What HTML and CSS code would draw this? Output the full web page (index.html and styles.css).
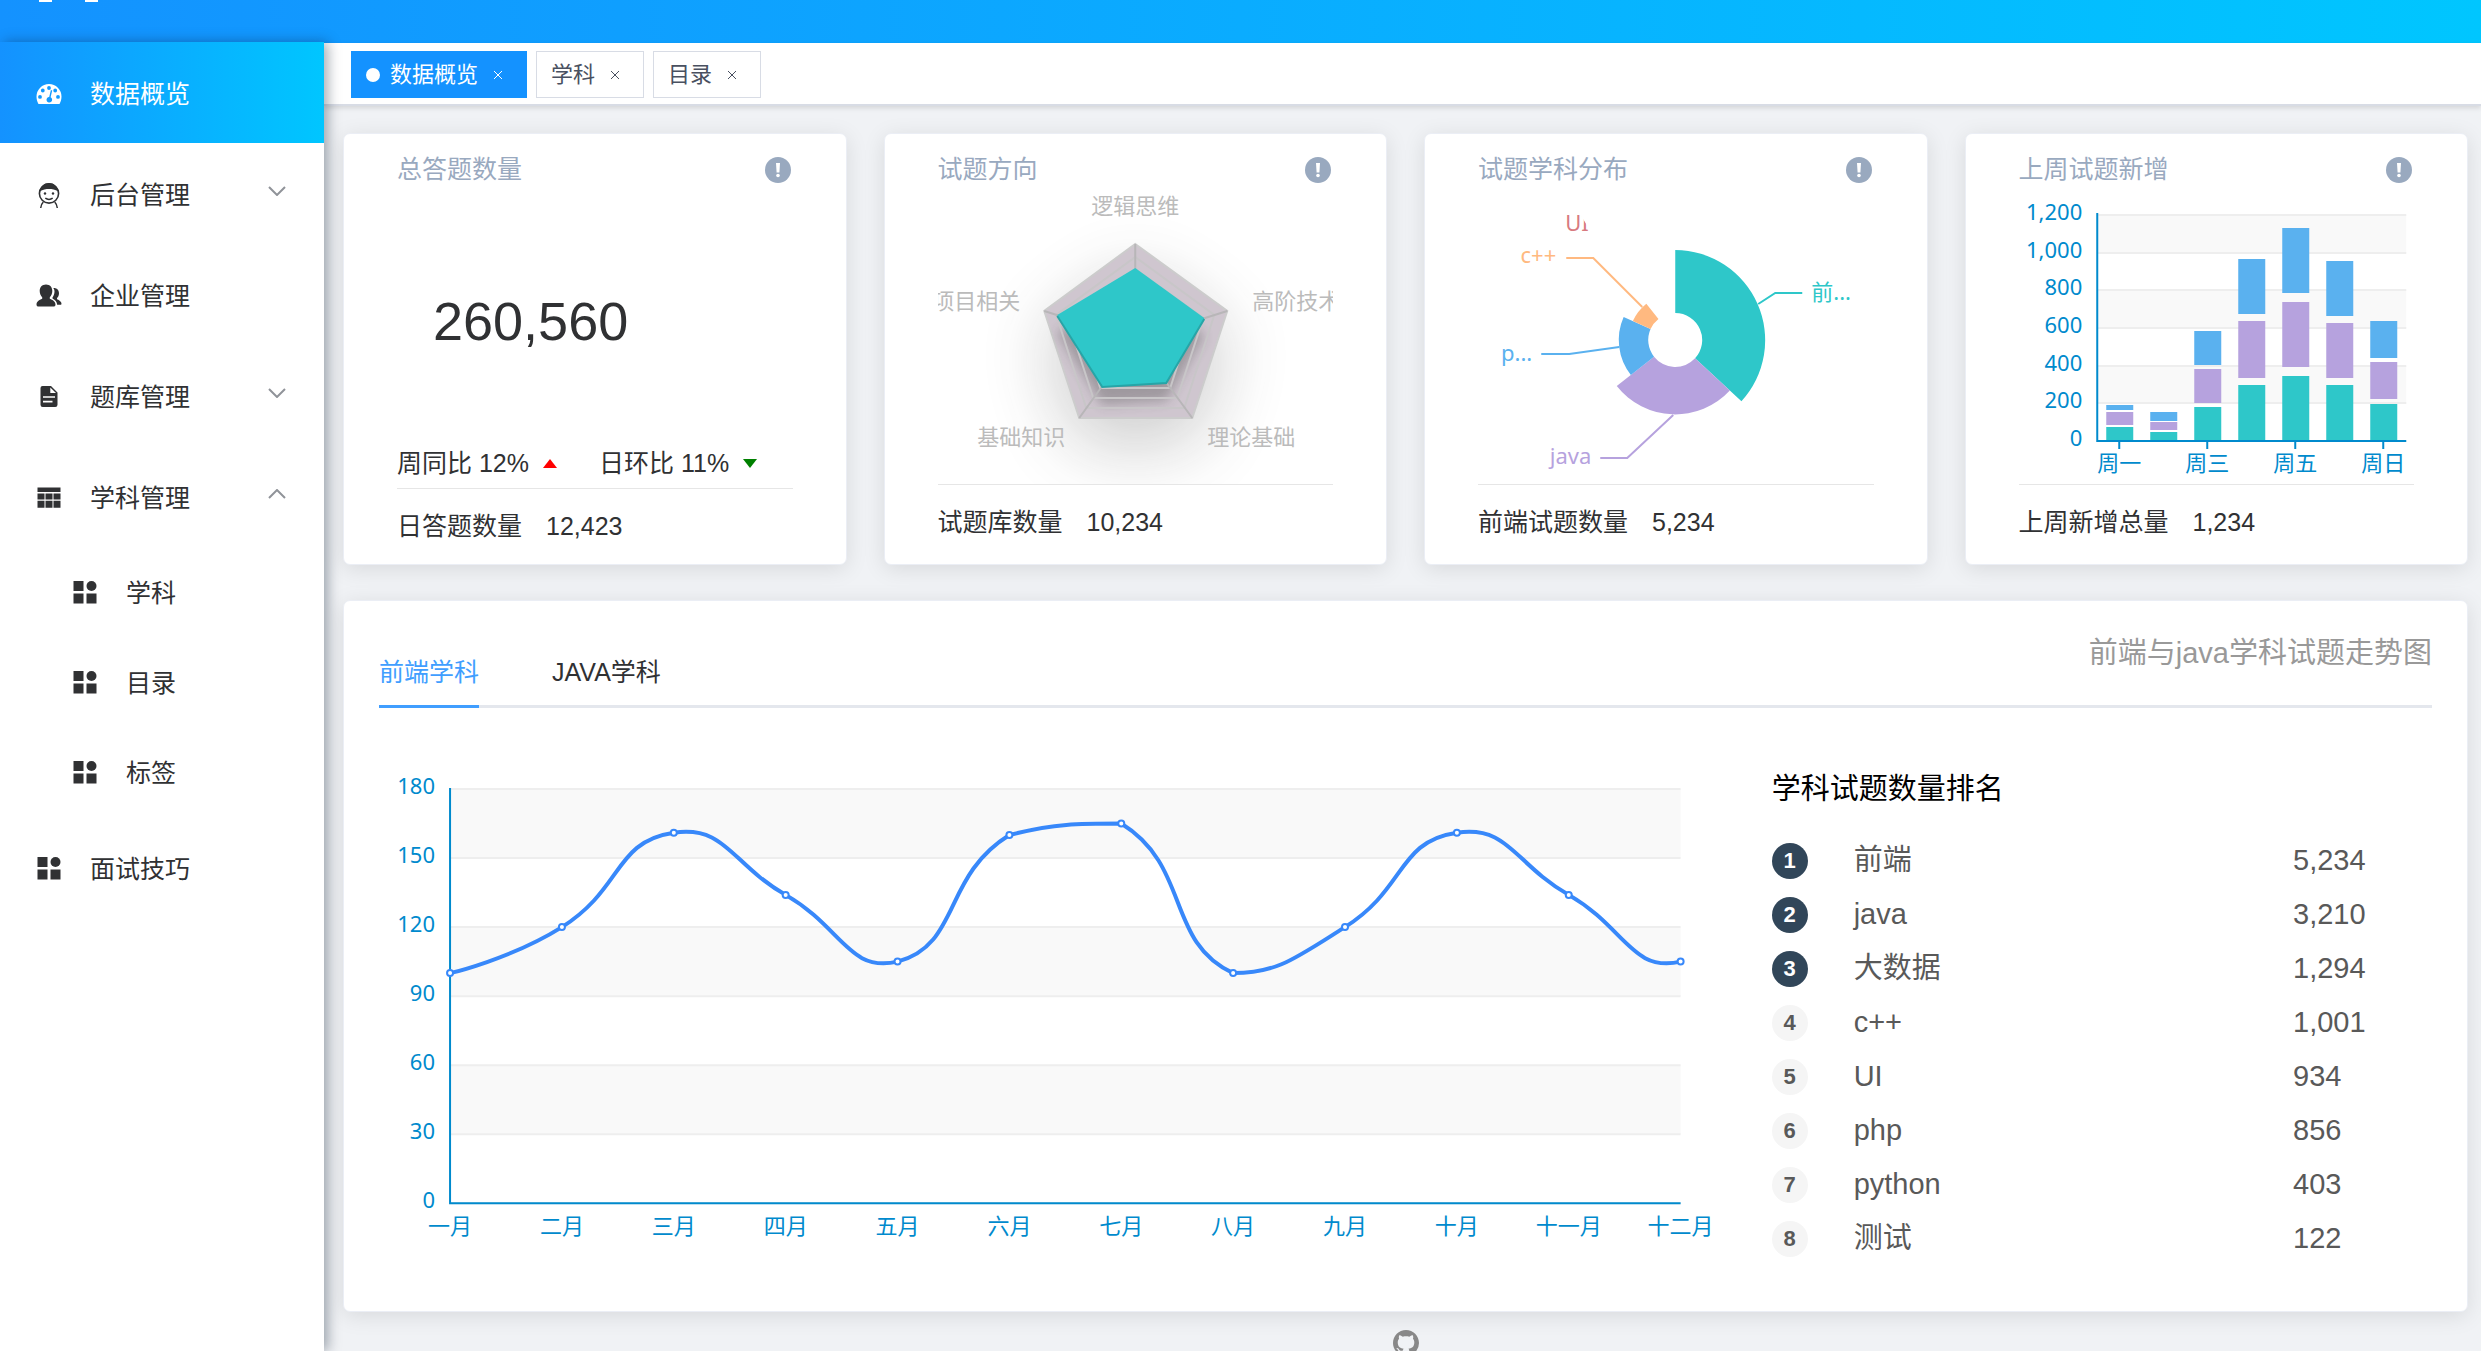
FILE: index.html
```html
<!DOCTYPE html>
<html lang="zh-CN">
<head>
<meta charset="utf-8">
<meta name="viewport" content="width=device-width, initial-scale=1">
<title>数据概览</title>
<link rel="stylesheet" href="styles.css">
</head>
<body>
<svg class="sprite" aria-hidden="true">
  <symbol id="i-dashboard" viewBox="0 0 26 26">
    <path fill-rule="evenodd" d="M13 3A12.500 12.500 0 0 0 .5 15.500c0 2.700.7 5.200 2 7.500h21c1.300-2.300 2-4.800 2-7.500A12.500 12.500 0 0 0 13 3zM4 17.800a1.900 1.900 0 1 1 0-3.800 1.900 1.900 0 0 1 0 3.800zm2.800-6.400a1.900 1.900 0 1 1 0-3.800 1.900 1.900 0 0 1 0 3.800zM13 8.900a1.900 1.900 0 1 1 0-3.800 1.900 1.900 0 0 1 0 3.800zm1.900.1 1.300.4-1.600 6.900a2.800 2.800 0 1 1-1.400-.3zm4.300 2.400a1.900 1.900 0 1 1 0-3.800 1.900 1.900 0 0 1 0 3.800zm2.800 6.400a1.900 1.900 0 1 1 0-3.800 1.900 1.900 0 0 1 0 3.800z"/>
  </symbol>
  <symbol id="i-face" viewBox="0 0 26 26">
    <circle cx="13" cy="11.500" r="9.600" fill="none" stroke="currentColor" stroke-width="1.600"/>
    <path d="M3.500 9.500C4.500 4 8.500 1 13 1s8.500 3 9.500 8.500C19 7.300 16 7 13 7S7 7.300 3.500 9.500z"/>
    <circle cx="9" cy="11.500" r="1.200"/><circle cx="17" cy="11.500" r="1.200"/>
    <path d="M9.300 16.200q3.700 2.600 7.400 0M7.300 20q-2.300 2.300-2.600 6M18.700 20q2.300 2.300 2.600 6" fill="none" stroke="currentColor" stroke-width="1.500"/>
  </symbol>
  <symbol id="i-people" viewBox="0 0 26 26">
    <path d="M10 1.500c4 0 6.300 2.800 6.300 6.500 0 2.500-1 4.800-2.500 6.200v1.600c3 1 5.700 3 5.700 5.700 0 1.500-.8 2-2 2H2.500c-1.200 0-2-.5-2-2 0-2.700 2.700-4.700 5.700-5.700v-1.600C4.700 12.800 3.700 10.500 3.700 8c0-3.700 2.300-6.500 6.300-6.500z"/>
    <path d="M17.300 5c3.600-.2 5.700 2 5.700 5.300 0 2.300-1 3.800-2 4.800v1.200c2.500.9 4.500 2.600 4.500 4.500 0 .8-.4 1-1 1h-3.300c-.3-2.800-2-4.800-4.700-6.200v-1.200c1.400-1.700 2-3.800 2-6.100 0-1.200-.4-2.300-1.200-3.300z"/>
  </symbol>
  <symbol id="i-doc" viewBox="0 0 26 26">
    <path fill-rule="evenodd" d="M6.500 2H15l6.500 6.500v12.300a2.200 2.200 0 0 1-2.200 2.200H6.700a2.200 2.200 0 0 1-2.200-2.200V4a2 2 0 0 1 2-2zm7.800 1.500V9h5.700zM7 12.200v1.600h12v-1.600zm0 4.600v1.600h9.500v-1.600z"/>
  </symbol>
  <symbol id="i-table" viewBox="0 0 26 26">
    <path d="M1.500 2.500h23V7h-23zM1.500 8.500h7v6h-7zM9.500 8.500h7v6h-7zM17.500 8.500h7v6h-7zM1.500 15.800h7v7h-7zM9.500 15.800h7v7h-7zM17.500 15.800h7v7h-7z"/>
  </symbol>
  <symbol id="i-component" viewBox="0 0 26 26">
    <path d="M1.500 1h10v10h-10zM1.500 13.500h10v10h-10zM14.500 13.500h10v10h-10z"/><circle cx="19.500" cy="6" r="5"/>
  </symbol>
  <symbol id="i-down" viewBox="0 0 18 10"><path d="M1 1l8 8 8-8" fill="none" stroke="currentColor" stroke-width="2"/></symbol>
  <symbol id="i-up" viewBox="0 0 18 10"><path d="M1 9l8-8 8 8" fill="none" stroke="currentColor" stroke-width="2"/></symbol>
  <symbol id="i-close" viewBox="0 0 10 10"><path d="M1 1l8 8M9 1L1 9" fill="none" stroke="currentColor"/></symbol>
  <symbol id="i-info" viewBox="0 0 26 26">
    <circle cx="13" cy="13" r="13"/><path d="M11 6h4l-.6 9.500h-2.800z" fill="#fff"/><circle cx="13" cy="18.500" r="1.800" fill="#fff"/>
  </symbol>
</svg>

<div class="app">
  <header class="topbar"><div class="brand" aria-hidden="true"><i></i><i></i></div></header>
  <div class="shell">
    <nav class="sidebar" aria-label="主菜单">
      <a class="item active" href="#"><svg class="ico"><use href="#i-dashboard"/></svg><span>数据概览</span></a>
      <button class="item" type="button" aria-expanded="false"><svg class="ico"><use href="#i-face"/></svg><span>后台管理</span><svg class="arrow"><use href="#i-down"/></svg></button>
      <a class="item" href="#"><svg class="ico"><use href="#i-people"/></svg><span>企业管理</span></a>
      <button class="item" type="button" aria-expanded="false"><svg class="ico"><use href="#i-doc"/></svg><span>题库管理</span><svg class="arrow"><use href="#i-down"/></svg></button>
      <button class="item" type="button" aria-expanded="true"><svg class="ico"><use href="#i-table"/></svg><span>学科管理</span><svg class="arrow"><use href="#i-up"/></svg></button>
      <a class="item sub" href="#"><svg class="ico"><use href="#i-component"/></svg><span>学科</span></a>
      <a class="item sub" href="#"><svg class="ico"><use href="#i-component"/></svg><span>目录</span></a>
      <a class="item sub" href="#"><svg class="ico"><use href="#i-component"/></svg><span>标签</span></a>
      <a class="item" href="#"><svg class="ico"><use href="#i-component"/></svg><span>面试技巧</span></a>
    </nav>

    <div class="content">
      <div class="views">
        <div class="view current"><i class="dot"></i><a href="#">数据概览</a><button type="button" aria-label="关闭数据概览"><svg><use href="#i-close"/></svg></button></div>
        <div class="view"><a href="#">学科</a><button type="button" aria-label="关闭学科"><svg><use href="#i-close"/></svg></button></div>
        <div class="view"><a href="#">目录</a><button type="button" aria-label="关闭目录"><svg><use href="#i-close"/></svg></button></div>
      </div>

      <main class="main">
        <section class="cards">
          <article class="card">
            <div class="card-head"><h2>总答题数量</h2><svg class="info"><use href="#i-info"/></svg></div>
            <div class="summary">
              <p class="total">260,560</p>
              <p class="rates">
                <span class="rate">周同比 12%<svg class="caret up" viewBox="0 0 14 9"><path d="M0 9L7 0l7 9z"/></svg></span>
                <span class="rate">日环比 11%<svg class="caret down" viewBox="0 0 14 9"><path d="M0 0h14L7 9z"/></svg></span>
              </p>
            </div>
            <p class="card-foot"><span>日答题数量</span><span>12,423</span></p>
          </article>

          <article class="card">
            <div class="card-head"><h2>试题方向</h2><svg class="info"><use href="#i-info"/></svg></div>
            <svg class="chart" viewBox="0 0 395 297" role="img" aria-label="试题方向">
              <defs>
                <filter id="halo" x="-100%" y="-100%" width="300%" height="300%"><feGaussianBlur stdDeviation="36"/></filter>
                <filter id="drop" x="-50%" y="-50%" width="200%" height="200%"><feGaussianBlur stdDeviation="6"/></filter>
              </defs>
              <path d="M197 84L289 151 254 258H141L106 151z" filter="url(#halo)" opacity=".24"/>
              <path class="radar-area" d="M197 57L289 124 254 231H141L106 124z"/>
              <path d="M197 99L266 149 228 214 164 218 119 146z" filter="url(#drop)" opacity=".3"/>
              <g class="radar-ring">
                <path d="M197 70L276 128 246 221H148L118 128z"/>
                <path d="M197 82L265 131 239 211H155L129 131z"/>
                <path d="M197 94L253 135 232 201H162L141 135z"/>
              </g>
              <path class="radar-axis" d="M197 57V153M289 124L197 153M254 231L197 153M141 231L197 153M106 124L197 153"/>
              <path class="radar-edge" d="M197 81L266 131 228 196 164 200 119 128z"/>
              <path class="radar-rim" d="M266 132L228 196 164 200 119 129"/>
              <g class="label radar-label">
                <text x="197" y="27" text-anchor="middle">逻辑思维</text>
                <text x="314" y="122">高阶技术</text>
                <text x="269" y="258">理论基础</text>
                <text x="127" y="258" text-anchor="end">基础知识</text>
                <text x="82" y="122" text-anchor="end">项目相关</text>
              </g>
            </svg>
            <p class="card-foot"><span>试题库数量</span><span>10,234</span></p>
          </article>

          <article class="card">
            <div class="card-head"><h2>试题学科分布</h2><svg class="info"><use href="#i-info"/></svg></div>
            <svg class="chart" viewBox="0 0 395 297" role="img" aria-label="试题学科分布">
              <clipPath id="ui-clip"><path d="M80 20H98L103 29 111 42V50H80z"/></clipPath>
              <g class="teal"><path d="M197 63A90.300 90.300 0 0 1 263.200 214.300L216.800 171.300A27 27 0 0 0 197 126z"/><path class="lead" d="M280 117L297 106H324"/><text class="label" x="333" y="113">前...</text></g>
              <g class="purple"><path d="M251.600 203.500A74.400 74.400 0 0 1 138.500 199L175.800 169.700A27 27 0 0 0 216.800 171.300z"/><path class="lead" d="M195 228L149 271H122"/><text class="label" x="113" y="277" text-anchor="end">java</text></g>
              <g class="blue"><path d="M152.600 187.900A56.500 56.500 0 0 1 145.400 130L172.300 142A27 27 0 0 0 175.800 169.700z"/><path class="lead" d="M141 160L91 167H63"/><text class="label" x="54" y="174" text-anchor="end">p...</text></g>
              <g class="orange"><path d="M154.600 134.100A46.400 46.400 0 0 1 168.100 116.700L180.200 131.900A27 27 0 0 0 172.300 142z"/><path class="lead" d="M164 120L115 71H88"/><text class="label" x="78" y="76" text-anchor="end">c++</text></g>
              <g class="red" clip-path="url(#ui-clip)"><text class="label" x="87" y="44">UI</text></g>
            </svg>
            <p class="card-foot"><span>前端试题数量</span><span>5,234</span></p>
          </article>

          <article class="card">
            <div class="card-head"><h2>上周试题新增</h2><svg class="info"><use href="#i-info"/></svg></div>
            <svg class="chart" id="week" viewBox="0 0 395 297" role="img" aria-label="上周试题新增"></svg>
            <p class="card-foot"><span>上周新增总量</span><span>1,234</span></p>
          </article>
        </section>

        <section class="panel">
          <div class="panel-head">
            <div class="tabs" role="tablist">
              <button class="tab selected" type="button" role="tab" aria-selected="true">前端学科</button>
              <button class="tab" type="button" role="tab" aria-selected="false">JAVA学科</button>
            </div>
            <h2>前端与java学科试题走势图</h2>
          </div>
          <div class="panel-body">
            <svg class="trend" id="trend" viewBox="0 0 1392 550" role="img" aria-label="试题走势"></svg>
            <div class="ranking">
              <h3>学科试题数量排名</h3>
              <ol>
                <li><b class="top">1</b><span>前端</span><span>5,234</span></li>
                <li><b class="top">2</b><span>java</span><span>3,210</span></li>
                <li><b class="top">3</b><span>大数据</span><span>1,294</span></li>
                <li><b>4</b><span>c++</span><span>1,001</span></li>
                <li><b>5</b><span>UI</span><span>934</span></li>
                <li><b>6</b><span>php</span><span>856</span></li>
                <li><b>7</b><span>python</span><span>403</span></li>
                <li><b>8</b><span>测试</span><span>122</span></li>
              </ol>
            </div>
          </div>
        </section>

        <footer class="foot">
          <a href="#" aria-label="GitHub"><svg viewBox="0 0 16 16"><path d="M8 0C3.580 0 0 3.580 0 8c0 3.540 2.290 6.530 5.470 7.590.4.070.550-.170.550-.380 0-.190-.010-.820-.010-1.490-2.010.370-2.530-.490-2.690-.940-.090-.230-.480-.940-.820-1.130-.280-.150-.680-.520-.010-.530.630-.010 1.080.580 1.230.820.720 1.210 1.870.870 2.330.660.070-.520.280-.870.510-1.070-1.780-.2-3.640-.890-3.640-3.950 0-.870.310-1.590.820-2.150-.080-.2-.360-1.020.080-2.120 0 0 .670-.210 2.200.820.640-.180 1.320-.270 2-.270s1.360.090 2 .270c1.530-1.040 2.200-.820 2.200-.820.440 1.100.160 1.920.080 2.120.510.560.820 1.270.820 2.150 0 3.070-1.870 3.750-3.650 3.950.290.250.540.730.540 1.480 0 1.070-.010 1.930-.010 2.200 0 .210.150.460.550.380A8.010 8.010 0 0 0 16 8c0-4.420-3.580-8-8-8z"/></svg></a>
        </footer>
      </main>
    </div>
  </div>
</div>
<script src="charts.js"></script>
</body>
</html>
```
FILE: styles.css
```css
* { box-sizing: border-box; }
html, body { height: 100%; }
body {
  margin: 0;
  font: 25px/40px "Liberation Sans", "Noto Sans CJK SC", sans-serif;
  color: #303133;
  background: #f0f2f5;
}
h2, h3, p, ol { margin: 0; padding: 0; font-weight: 400; font-size: inherit; }
ol { list-style: none; }
a { color: inherit; text-decoration: none; }
button { margin: 0; padding: 0; border: 0; background: none; color: inherit; font: inherit; cursor: pointer; }
svg { display: block; fill: currentColor; }
.sprite { position: absolute; width: 0; height: 0; }

.app { height: 100vh; display: flex; flex-direction: column; overflow: hidden; }
.topbar { flex: 0 0 43px; background: linear-gradient(90deg, #1492ff, #00c6ff); }
.brand { display: flex; gap: 33px; padding-left: 39px; }
.brand i { width: 13px; height: 2px; background: #fff; }
.shell { flex: 1; min-height: 0; display: flex; }

.sidebar {
  flex: 0 0 324px;
  margin-top: -1px;
  z-index: 2;
  background: #fff;
  box-shadow: 4px 0 12px rgba(0, 21, 41, .35);
}
.item {
  display: flex;
  align-items: center;
  gap: 28px;
  width: 100%;
  height: 101px;
  padding: 2px 38px 0 36px;
  text-align: left;
}
.item.active { color: #fff; background: linear-gradient(90deg, #1492ff, #00c6ff); }
.item.sub { height: 90px; padding-left: 72px; }
.ico { flex: none; width: 26px; height: 26px; }
.arrow { width: 18px; height: 10px; margin: 0 0 8px auto; color: #909399; }

.content { flex: 1; min-width: 0; display: flex; flex-direction: column; }
.views {
  flex: 0 0 63px;
  display: flex;
  align-items: flex-start;
  gap: 9px;
  padding: 8px 27px 0;
  background: #fff;
  border-bottom: 2px solid #d8dce5;
  box-shadow: 0 2px 5px rgba(0, 0, 0, .12);
}
.view {
  display: flex;
  align-items: center;
  height: 47px;
  padding: 0 14px;
  border: 1px solid #d8dce5;
  color: #495060;
  font-size: 22px;
}
.view.current { color: #fff; background: #1492ff; border-color: #1492ff; }
.view .dot { width: 14px; height: 14px; margin-right: 10px; border-radius: 50%; background: #fff; }
.view button { display: grid; place-items: center; width: 28px; height: 28px; margin-left: 6px; }
.view button svg { width: 10px; height: 10px; }

.main { flex: 1; padding: 27px 13px 0 19px; }
.cards { display: grid; grid-template-columns: repeat(4, minmax(0, 1fr)); gap: 37px; }
.card, .panel {
  background: #fff;
  border: 1px solid #ebeef5;
  border-radius: 7px;
  box-shadow: 0 4px 22px rgba(0, 0, 0, .1);
}
.card { padding: 17px 53px 18px; }
.card-head { display: flex; align-items: center; justify-content: space-between; height: 36px; color: #99a9bf; }
.info { width: 26px; height: 26px; margin: 2px 2px 0 0; }
.chart { width: 100%; height: 297px; }
.card-foot { display: flex; gap: 24px; padding-top: 17px; border-top: 1px solid #e6e6e6; }
.summary { display: flex; flex-direction: column; justify-content: space-between; height: 301px; padding: 102px 0 5px; }
.total { padding-left: 36px; font-size: 54px; line-height: 64px; }
.rates { display: flex; gap: 42px; }
.rate { display: flex; align-items: center; gap: 14px; }
.caret { width: 14px; height: 9px; }
.caret.up { color: red; }
.caret.down { color: green; }

.label { font: 22px "Noto Sans", "Noto Sans CJK SC", sans-serif; }
.radar-area { fill: #cfc6cf; stroke: #ccc; stroke-width: 2; }
.radar-ring { fill: none; stroke: #c8c6c8; stroke-width: 2; }
.radar-axis { fill: none; stroke: #b8b6b8; stroke-width: 2; }
.radar-edge { fill: #2ec7c9; }
.radar-rim { fill: none; stroke: #26a5a7; stroke-width: 2; }
.radar-label { fill: #bbb; }
.teal { fill: #2ec7c9; color: #2ec7c9; }
.purple { fill: #b6a2de; color: #b6a2de; }
.blue { fill: #5ab1ef; color: #5ab1ef; }
.orange { fill: #ffb980; color: #ffb980; }
.red { fill: #d87a80; }
.lead { fill: none; stroke: currentColor; stroke-width: 2; }
.band { fill: #f9f9f9; }
.grid { stroke: #eee; stroke-width: 2; }
.axis { fill: none; stroke: #008acd; stroke-width: 2; }
.axis-label { fill: #008acd; }
.curve { fill: none; stroke: #3888fa; stroke-width: 4; }
.point { fill: #fff; stroke: #3888fa; stroke-width: 2; }

.panel { margin-top: 35px; padding: 35px 35px 45px; }
.panel-head { display: flex; justify-content: space-between; box-shadow: inset 0 -3px #e4e7ed; }
.panel-head h2 { color: #999; font-size: 29px; line-height: 34px; }
.tabs { display: flex; gap: 73px; }
.tab { height: 72px; }
.tab.selected { color: #409eff; box-shadow: inset 0 -3px #409eff; }
.panel-body { display: grid; grid-template-columns: minmax(0, 116fr) minmax(0, 55fr); align-items: start; }
.trend { width: 100%; }
.ranking { padding-top: 60px; font-size: 29px; color: #595959; }
.ranking h3 { margin-bottom: 24px; color: #000; line-height: 42px; }
.ranking li { display: grid; grid-template-columns: 82px 1fr 139px; align-items: center; height: 54px; }
.ranking span { padding-bottom: 3px; }
.ranking b { width: 36px; height: 36px; border-radius: 50%; background: #f5f5f5; font-size: 22px; line-height: 36px; text-align: center; }
.ranking .top { background: #314659; color: #fff; }

.foot { display: flex; justify-content: center; padding-top: 18px; color: #888; }
.foot svg { width: 26px; height: 26px; }
```
FILE: charts.js
```js
function add(parent, tag, attrs, text) {
  const node = document.createElementNS('http://www.w3.org/2000/svg', tag);
  for (const key in attrs) node.setAttribute(key, attrs[key]);
  if (text !== undefined) node.textContent = text;
  parent.appendChild(node);
  return node;
}

// Horizontal bands, split lines and value labels shared by both charts.
function valueAxis(svg, o) {
  const step = (o.bottom - o.top) / (o.ticks.length - 1);
  o.ticks.forEach((label, i) => {
    const y = Math.round(o.top + step * i);
    if (i % 2 === 0 && i < o.ticks.length - 1) {
      add(svg, 'rect', { class: 'band', x: o.left, y: y, width: o.right - o.left, height: Math.round(step) });
    }
    add(svg, 'path', { class: 'grid', d: `M${o.left} ${y}H${o.right}` });
    add(svg, 'text', { class: 'label axis-label', x: o.left - 15, y: y + 5, 'text-anchor': 'end' }, label);
  });
}

function weekChart(svg) {
  const box = { left: 78, right: 387, top: 28, bottom: 254, ticks: ['1,200', '1,000', '800', '600', '400', '200', '0'] };
  valueAxis(svg, box);
  // Each day: top of the first stack, then top and bottom of the other two.
  const days = [
    [240, 225, 238, 218, 223],
    [245, 235, 243, 225, 234],
    [220, 182, 216, 144, 178],
    [198, 134, 191, 72, 127],
    [189, 115, 180, 41, 106],
    [198, 136, 191, 74, 129],
    [217, 175, 212, 134, 171]
  ];
  const names = ['周一', '', '周三', '', '周五', '', '周日'];
  days.forEach((d, i) => {
    const x = 87 + 44 * i;
    const bar = (cls, top, bottom) => add(svg, 'rect', { class: cls, x: x, y: top, width: 27, height: bottom - top });
    bar('teal', d[0], 253);
    bar('purple', d[1], d[2]);
    bar('blue', d[3], d[4]);
    if (names[i]) {
      add(svg, 'path', { class: 'axis', d: `M${x + 13} 254V262` });
      add(svg, 'text', { class: 'label axis-label', x: x + 13, y: 284, 'text-anchor': 'middle' }, names[i]);
    }
  });
  add(svg, 'path', { class: 'axis', d: 'M78 26V254H387' });
}

function trendChart(svg) {
  const box = { left: 71, right: 1301, top: 81, bottom: 495, ticks: [180, 150, 120, 90, 60, 30, 0] };
  valueAxis(svg, box);
  // The value after December only shapes how the curve arrives there.
  const values = [100, 120, 161, 134, 105, 160, 165, 100, 120, 161, 134, 105, 160];
  const names = ['一月', '二月', '三月', '四月', '五月', '六月', '七月', '八月', '九月', '十月', '十一月', '十二月'];
  const toY = v => box.bottom - (v / 180) * (box.bottom - box.top);
  const pts = values.map((v, i) => [box.left + (i * (box.right - box.left)) / 11, toY(v)]);
  const low = toY(Math.min(...values));
  const high = toY(Math.max(...values));
  const clamp = y => Math.min(low, Math.max(high, y));
  const dist = (a, b) => Math.hypot(a[0] - b[0], a[1] - b[1]);
  let out = pts[0];
  let d = 'M' + pts[0];
  for (let i = 1; i < names.length; i++) {
    const p = pts[i];
    const vx = pts[i + 1][0] - pts[i - 1][0];
    const vy = pts[i + 1][1] - pts[i - 1][1];
    const before = dist(p, pts[i - 1]);
    const after = dist(p, pts[i + 1]);
    const r = after / (before + after);
    const into = [p[0] - vx * 0.5 * (1 - r), clamp(p[1] - vy * 0.5 * (1 - r))];
    d += 'C' + [out, into, p].join(' ');
    out = [p[0] + vx * 0.5 * r, clamp(p[1] + vy * 0.5 * r)];
  }
  add(svg, 'path', { class: 'axis', d: 'M71 80V495H1301' });
  add(svg, 'path', { class: 'curve', d: d });
  names.forEach((name, i) => {
    add(svg, 'circle', { class: 'point', cx: pts[i][0], cy: pts[i][1], r: 3 });
    add(svg, 'text', { class: 'label axis-label', x: pts[i][0], y: 526, 'text-anchor': 'middle' }, name);
  });
}

weekChart(document.getElementById('week'));
trendChart(document.getElementById('trend'));
```
